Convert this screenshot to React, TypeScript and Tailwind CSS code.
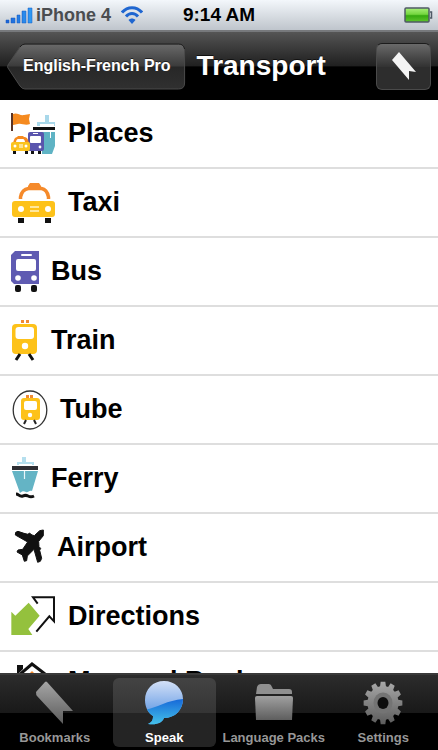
import { useState } from "react";
import type { ReactNode } from "react";

type Row = {
    name: string;
    icon: ReactNode;
};

type Tab = {
    name: string;
    icon: ReactNode;
};

const PlacesIcon = () => (
    <svg width="45" height="44" viewBox="0 0 45 44">
        <rect x="0" y="1" width="2" height="18" fill="#5a3426" />
        <path d="M2 2c4-2 7 2 11 1 2 0 4-1 6-1l-1 5 1 5c-5 2-8-1-12 0-2 0-3 1-5 1z" fill="#f58a1f" />
        <path d="M34 3h4v7h6v4h-1v-2H29v2h-3v-4h8z" fill="#a9d8ea" />
        <rect x="22" y="15" width="22" height="3" fill="#111" />
        <path d="M31 20h13v14l-3 8H31z" fill="#5fb3c4" />
        <path d="M39 20h1v6h-1z" fill="#fff" />
        <rect x="17" y="20" width="16" height="19" rx="2" fill="#5a55ad" />
        <rect x="19" y="24" width="11" height="7" rx="1" fill="#fff" />
        <rect x="22" y="21" width="5" height="1" fill="#fff" />
        <circle cx="29" cy="35" r="1.4" fill="#fff" />
        <path d="M20 39h3v3h-3zM27 39h3v3h-3z" fill="#111" />
        <path d="M2 31c1-4 2-6 4-6l1-1h5l1 1c3 0 4 2 5 6z" fill="#f58a1f" />
        <path d="M5 31c0-3 1-4 2-4h5c1 0 2 1 2 4z" fill="#fff" />
        <rect x="0" y="30" width="19" height="9" rx="2" fill="#fbc31c" />
        <circle cx="4" cy="34" r="1.5" fill="#fff" />
        <circle cx="15" cy="34" r="1.5" fill="#fff" />
        <path d="M8 33h4M8 35h4" stroke="#fff" strokeWidth="1" />
        <path d="M2 39h3v3H2zM14 39h3v3h-3z" fill="#111" />
    </svg>
);

const TaxiIcon = () => (
    <svg width="45" height="44" viewBox="0 0 45 44">
        <path d="M17 5l2-3h9l2 3v4H17z" fill="#f58a2b" />
        <path d="M9.500 18V16c1-5 4-8 8-8.500h13c4 .5 6 3.500 7 8.500v2" stroke="#f58a2b" strokeWidth="3.500" fill="none" />
        <rect x="1" y="20" width="43" height="16" rx="3" fill="#fdc21a" />
        <circle cx="10" cy="28" r="3" fill="#fff" />
        <circle cx="37" cy="28" r="3" fill="#fff" />
        <path d="M19 26h9M19 30h9" stroke="#fff3c8" strokeWidth="1.500" />
        <path d="M7 37h6v5H7zM34 37h6v5h-6z" fill="#111" />
    </svg>
);

const BusIcon = () => (
    <svg width="28" height="44" viewBox="0 0 28 44">
        <path d="M4 1h24v33H3l-3-3V5z" fill="#5f5bb2" />
        <rect x="10" y="4" width="11" height="2" rx="1" fill="#fff" />
        <rect x="5" y="9" width="20" height="12" rx="2" fill="#fff" />
        <circle cx="7" cy="28" r="2.800" fill="#fff" />
        <circle cx="23" cy="28" r="2.800" fill="#fff" />
        <rect x="4" y="35" width="6" height="7" rx="2" fill="#111" />
        <rect x="20" y="35" width="6" height="7" rx="2" fill="#111" />
    </svg>
);

const TrainIcon = () => (
    <svg width="28" height="44" viewBox="0 0 28 44">
        <path d="M10 1h3v3h-3zM15 1h3v3h-3z" fill="#f08a35" />
        <rect x="1" y="5" width="25" height="30" rx="4" fill="#fdc21a" />
        <rect x="4.500" y="8" width="18.500" height="12" rx="3" fill="#fff" />
        <circle cx="14" cy="27" r="3.200" fill="#fff" />
        <path d="M9 35l-4 6M18 35l4 6" stroke="#111" strokeWidth="3" />
    </svg>
);

const TubeIcon = () => (
    <svg width="37" height="44" viewBox="0 0 37 44">
        <ellipse cx="19" cy="22" rx="16.800" ry="19" fill="none" stroke="#333" strokeWidth="1.300" />
        <path d="M15 7h3v3h-3zM19 7h3v3h-3z" fill="#f08a35" />
        <rect x="10" y="10" width="19" height="22" rx="3" fill="#fdc21a" />
        <rect x="13" y="13" width="13" height="9" rx="2" fill="#fff" />
        <circle cx="19" cy="27" r="2.200" fill="#fff" />
        <path d="M15 32l-2 4M23 32l2 4" stroke="#222" strokeWidth="2" />
    </svg>
);

const FerryIcon = () => (
    <svg width="28" height="44" viewBox="0 0 28 44">
        <path d="M11 0h4v5h8v3h-2V7H8v1H6V5h5z" fill="#b5dfee" />
        <rect x="1" y="9" width="26" height="4" fill="#2e2e33" />
        <path d="M1 14h26l-6 20c-3-1-4 2-6 1s-4-1-6 1z" fill="#64b4c5" />
        <path d="M13.500 14v8" stroke="#e8f6fa" strokeWidth="1.200" />
        <path d="M5 37c3 0 3 3 7 2 2-1 3-1 5 0 2 1 4 1 6 0" stroke="#111" strokeWidth="3" fill="none" />
    </svg>
);

const AirportIcon = () => (
    <svg width="34" height="44" viewBox="0 0 34 44">
        <g transform="translate(-11 -17) scale(.3333)">
            <path
                d="M130 63L119 65L103 80L96 78L88 72L84 76L72 73L54 67L47 70L46 78L83 99L68 121L54 123L51 129L67 138L73 157L80 155L82 141L102 121L113 160L121 157L125 148L119 124L122 118L117 113L116 97L130 80z"
                fill="#111"
                stroke="#111"
                strokeWidth="3"
                strokeLinejoin="round"
            />
        </g>
    </svg>
);

const DirectionsIcon = () => (
    <svg width="45" height="44" viewBox="0 0 45 44">
        <g transform="translate(-11 -86) scale(.3333)">
            <path d="M34 308l12 12 40-39 33 39-34 40 12 18H34z" fill="#94c13d" />
            <path d="M113 284l-14-19h63v72l-14-15-39 46" fill="none" stroke="#111" strokeWidth="6" />
        </g>
    </svg>
);

const HouseIcon = () => (
    <svg width="45" height="44" viewBox="0 0 45 44">
        <path d="M13 20l8-8 8 8v20H13z" fill="#f58a2b" />
        <path d="M6 6h6v4l-6 6z" fill="#111" />
        <path d="M7 17L21 5l13 10" stroke="#111" strokeWidth="3" fill="none" />
    </svg>
);

const BookmarkIcon = () => (
    <svg width="40" height="44" viewBox="0 0 40 44">
        <defs>
            <linearGradient id="bm" x1="0" y1="0" x2="0" y2="1">
                <stop offset="0" stopColor="#a5a5a5" />
                <stop offset="1" stopColor="#5c5c5c" />
            </linearGradient>
        </defs>
        <path d="M10 1q1-1 2 0l26 29H28v13L2 15q-1-1-1-4z" fill="url(#bm)" />
    </svg>
);

const SpeakIcon = () => (
    <svg width="40" height="44" viewBox="0 0 40 44">
        <defs>
            <linearGradient id="bubble" x1="0" y1="0" x2="0" y2="1">
                <stop offset="0" stopColor="#d3e0f7" />
                <stop offset="0.6" stopColor="#7ba9e8" />
                <stop offset="1" stopColor="#3f8ee0" />
            </linearGradient>
            <linearGradient id="bubbleLow" x1="0" y1="0" x2="0" y2="1">
                <stop offset="0" stopColor="#1668d8" />
                <stop offset="1" stopColor="#45c3ea" />
            </linearGradient>
            <clipPath id="bubbleShape">
                <path d="M20 0c11 0 19 8 19 18 0 11-8 19-19 19-2 5-7 7-16 6 4-2 5-4 5-8C4 32 1 26 1 19 1 8 9 0 20 0z" />
            </clipPath>
        </defs>
        <g clipPath="url(#bubbleShape)">
            <rect width="40" height="44" fill="url(#bubble)" />
            <path d="M0 29C14 27 23 19 40 18v26H0z" fill="url(#bubbleLow)" />
        </g>
    </svg>
);

const FolderIcon = () => (
    <svg width="40" height="44" viewBox="0 0 40 44">
        <defs>
            <linearGradient id="folder" x1="0" y1="0" x2="0" y2="1">
                <stop offset="0" stopColor="#a0a0a0" />
                <stop offset="1" stopColor="#5e5e5e" />
            </linearGradient>
        </defs>
        <path d="M2 13l1-7q1-3 4-3h8q2 0 3 3l1 2h16q3 0 3 3v2z" fill="#8f8f8f" />
        <path d="M3 15h34q2 0 2 2l-1 22H2L1 17q0-2 2-2z" fill="url(#folder)" />
    </svg>
);

const gearPath = () => {
    const teeth = 12;
    const step = (Math.PI * 2) / teeth;
    const points: string[] = [];
    for (let i = 0; i < teeth; i++) {
        const a = i * step - Math.PI / 2;
        const corners = [[-0.19, 15.5], [-0.12, 19.5], [0.12, 19.5], [0.19, 15.5]];
        corners.forEach(([da, r]) => {
            points.push(`${(20 + r * Math.cos(a + da)).toFixed(2)} ${(20 + r * Math.sin(a + da)).toFixed(2)}`);
        });
    }
    return `M${points.join("L")}z`;
};

const SettingsIcon = () => (
    <svg width="40" height="44" viewBox="0 0 40 40" preserveAspectRatio="none">
        <defs>
            <linearGradient id="gear" x1="0" y1="0" x2="0" y2="1">
                <stop offset="0" stopColor="#a8a8a8" />
                <stop offset="1" stopColor="#5c5c5c" />
            </linearGradient>
        </defs>
        <path d={gearPath()} fill="url(#gear)" />
        <circle cx="20" cy="20" r="9.500" fill="#747474" />
        <circle cx="20" cy="20" r="5.500" fill="#0d0d0d" />
    </svg>
);

const rows: Row[] = [
    { name: "Places", icon: <PlacesIcon /> },
    { name: "Taxi", icon: <TaxiIcon /> },
    { name: "Bus", icon: <BusIcon /> },
    { name: "Train", icon: <TrainIcon /> },
    { name: "Tube", icon: <TubeIcon /> },
    { name: "Ferry", icon: <FerryIcon /> },
    { name: "Airport", icon: <AirportIcon /> },
    { name: "Directions", icon: <DirectionsIcon /> },
    { name: "Map and Bank", icon: <HouseIcon /> },
];

const tabs: Tab[] = [
    { name: "Bookmarks", icon: <BookmarkIcon /> },
    { name: "Speak", icon: <SpeakIcon /> },
    { name: "Language Packs", icon: <FolderIcon /> },
    { name: "Settings", icon: <SettingsIcon /> },
];

const StatusBar = () => (
    <div className="flex h-[30px] shrink-0 items-center bg-linear-to-b from-[#f3f7fb] to-[#bfc5cc] px-[5px] font-bold">
        <div className="flex flex-1 items-center">
            <svg width="28" height="18" viewBox="0 0 28 18">
                <defs>
                    <linearGradient id="signal" x1="0" y1="0" x2="1" y2="0">
                        <stop offset="0" stopColor="#1a62d6" />
                        <stop offset="1" stopColor="#2f9bf5" />
                    </linearGradient>
                </defs>
                <path
                    d="M1 14h3v3H1zM6 12h4v5H6zM12 9h3v8h-3zM17 5h4v12h-4zM23 2h4v15h-4z"
                    fill="url(#signal)"
                    stroke="#1558c0"
                    strokeWidth=".5"
                />
            </svg>
            <span className="ml-[3px] text-[18px] text-[#4b4d50]">iPhone 4</span>
            <svg className="ml-[10px]" width="22" height="20" viewBox="0 0 22 20">
                <g fill="none" stroke="#1f66d0" strokeWidth="3">
                    <path d="M1 7.500C6.500 1 15.500 1 21 7.500" />
                    <path d="M5 11.500c3.500-4 8.500-4 12 0" />
                </g>
                <path d="M11 19l-3.500-4c2-2 5-2 7 0z" fill="#1f66d0" />
            </svg>
        </div>
        <span className="text-[19px] text-black">9:14 AM</span>
        <div className="flex flex-1 justify-end">
            <svg width="29" height="16" viewBox="0 0 29 16">
                <defs>
                    <linearGradient id="battery" x1="0" y1="0" x2="0" y2="1">
                        <stop offset="0" stopColor="#a9f07a" />
                        <stop offset="0.450" stopColor="#74d63f" />
                        <stop offset="0.550" stopColor="#35a90f" />
                        <stop offset="1" stopColor="#5fc52d" />
                    </linearGradient>
                </defs>
                <rect x="1" y="1" width="24" height="14" rx="1" fill="url(#battery)" stroke="#4f5a66" strokeWidth="1.500" />
                <path d="M26 5h1.500v6H26" fill="none" stroke="#4f5a66" strokeWidth="1.500" />
            </svg>
        </div>
    </div>
);

const NavBar = () => (
    <header className="flex h-[70px] shrink-0 items-center border-t-2 border-[#77797c] bg-linear-to-b from-[#555] via-[#202020] via-50% to-black to-52% px-[7px]">
        <button className="relative h-[47px] pl-4 pr-[15px] text-[16px] font-bold whitespace-nowrap text-white">
            <svg className="absolute inset-0 h-full w-full" viewBox="0 0 179 47" preserveAspectRatio="none">
                <defs>
                    <linearGradient id="back" x1="0" y1="0" x2="0" y2="1">
                        <stop offset="0" stopColor="#6a6a6a" />
                        <stop offset="0.490" stopColor="#3b3b3b" />
                        <stop offset="0.510" stopColor="#272727" />
                        <stop offset="1" stopColor="#303030" />
                    </linearGradient>
                </defs>
                <path
                    d="M18 1h154q6 0 6 6v33q0 6-6 6H18q-3 0-5-3L1 25q-1-1 0-3L13 4q2-3 5-3z"
                    fill="url(#back)"
                    stroke="#4a4a4a"
                />
                <path d="M13 4q2-3 5-3h154q5 0 6 5" fill="none" stroke="#1c1c1c" />
            </svg>
            <span className="relative [text-shadow:0_-1px_0_#222]">English-French Pro</span>
        </button>
        <h1 className="ml-[11px] flex-1 text-[28px] leading-[40px] font-bold text-white [text-shadow:0_-1px_0_#111]">Transport</h1>
        <button
            aria-label="Bookmark"
            className="flex h-[47px] w-[55px] items-center justify-center rounded-md border border-[#4a4a4a] border-t-[#1c1c1c] bg-linear-to-b from-[#6a6a6a] via-[#333] via-50% to-[#2d2d2d] to-52%"
        >
            <svg width="28" height="30" viewBox="0 0 28 30">
                <path d="M9 1l17 20-7-1v9L2 9z" fill="#f4f4f4" />
            </svg>
        </button>
    </header>
);

export default function App() {
    const [active, setActive] = useState("Speak");

    return (
        <div className="flex h-screen flex-col overflow-hidden bg-white font-['Liberation_Sans',Arial,sans-serif]">
            <StatusBar />
            <NavBar />

            <main className="min-h-0 flex-1 overflow-y-auto [scrollbar-width:none]">
                <ul>
                    {rows.map((row) => (
                        <li key={row.name} className="h-[69px] border-b-2 border-[#dedede] last:h-[58px] last:border-b-0">
                            <button className="flex h-full w-full items-center gap-3 pl-[11px] text-left text-[27px] font-bold text-black">
                                {row.icon}
                                <span>{row.name}</span>
                            </button>
                        </li>
                    ))}
                </ul>
            </main>

            <nav className="flex h-[77px] shrink-0 border-t-2 border-[#3a3a3a] bg-linear-to-b from-[#2c2c2c] via-[#191919] via-50% to-black to-51% py-[3px]">
                {tabs.map((tab) => (
                    <button
                        key={tab.name}
                        onClick={() => setActive(tab.name)}
                        className={`mx-[3px] flex flex-1 basis-0 flex-col items-center rounded-md pt-[3px] text-[13px] font-bold whitespace-nowrap ${
                            active === tab.name
                                ? "bg-linear-to-b from-[#434343] via-[#353535] via-50% to-[#242424] to-51% text-white"
                                : "text-[#979797]"
                        }`}
                    >
                        {tab.icon}
                        <span className="mt-1 leading-[18px]">{tab.name}</span>
                    </button>
                ))}
            </nav>
        </div>
    );
}
